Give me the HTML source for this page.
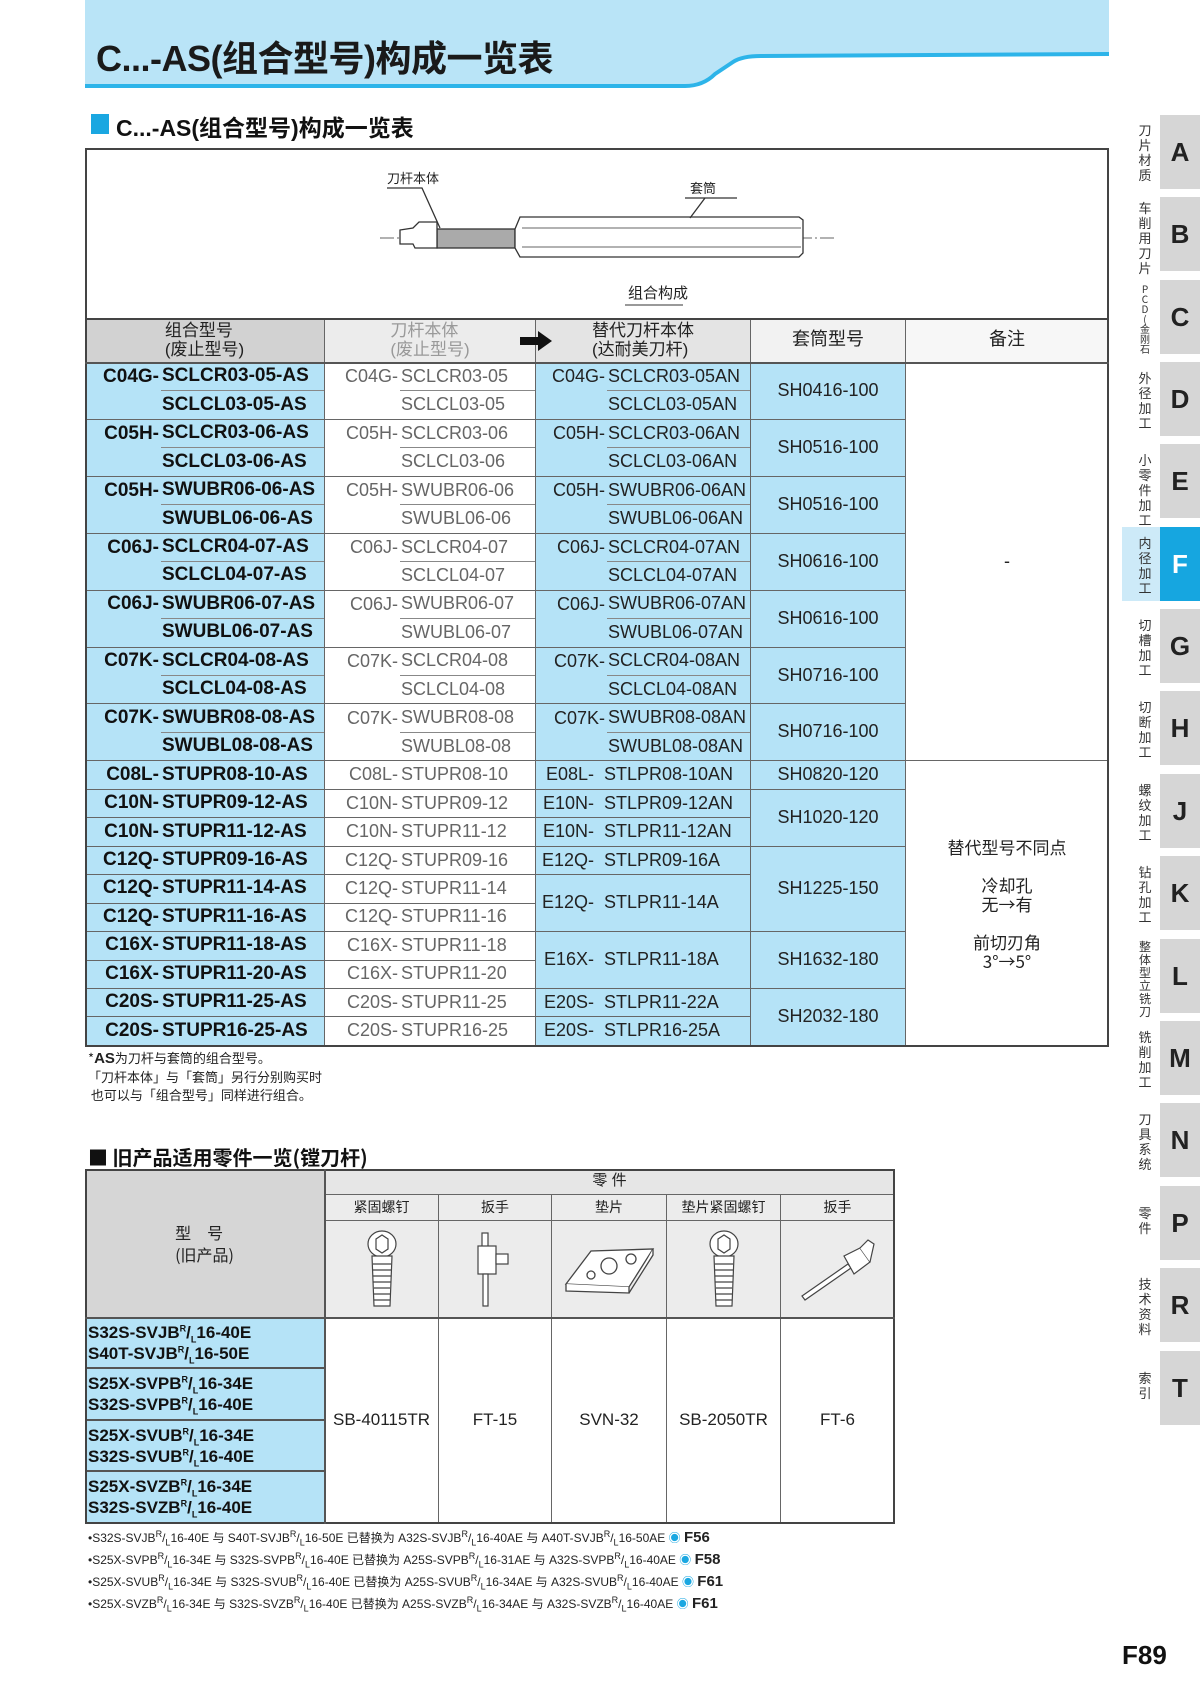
<!DOCTYPE html>
<html><head><meta charset="utf-8"><style>
*{margin:0;padding:0;box-sizing:border-box}
body{width:1200px;height:1697px;background:#fff;position:relative;overflow:hidden;font-family:"Liberation Sans","Noto Sans CJK SC",sans-serif;color:#222}
.abs{position:absolute}
.grid{position:absolute;display:grid}
.c{border-right:1px solid #666;border-bottom:1px solid #666;display:flex;align-items:center;justify-content:center;font-size:18px;line-height:1.1;white-space:nowrap;overflow:hidden}
.b{background:#b5e3f7}
.w{background:#fff}
.pf{display:flex;align-items:stretch;justify-content:flex-start;padding:0}
.pf .p{display:flex;align-items:center;justify-content:flex-end;padding-right:2px}
.pf .s{flex:1;display:flex;align-items:center;padding-left:1px}
.ul .s{border-bottom:1px solid #888}
.nb{border-bottom:none}
.k1{font-weight:bold;font-size:19px;color:#111}
.k2{color:#666}
.tab{position:absolute;left:1160px;width:40px;height:74px;background:#d6d6d6;font:bold 26px "Liberation Sans",sans-serif;color:#222;display:flex;align-items:center;justify-content:center}
.lab{position:absolute;left:1133px;width:24px;font-size:13px;line-height:15px;text-align:center;color:#333;font-family:"Noto Sans CJK SC",sans-serif;word-break:break-all}
sup,sub{font-size:9px;line-height:0}
</style></head><body>

<div class="abs" style="left:85px;top:0;width:1024px;height:88px;background:#b9e4f7"></div>
<svg class="abs" style="left:85px;top:0" width="1024" height="95"><path d="M600 86 Q618 86 630 74 L648 62 Q657 56 676 56 L1024 56 L1024 95 L600 95 Z" fill="#fff"/><rect x="0" y="88" width="1024" height="7" fill="#fff"/><path d="M0 86 L600 86 Q618 86 630 74 L648 62 Q657 56 676 56 L1024 54" stroke="#2db4e9" stroke-width="4" fill="none"/></svg>
<div class="abs" style="left:96px;top:30px;font-size:36px;font-weight:bold;color:#1a1a1a;letter-spacing:-0.5px">C...-AS(组合型号)构成一览表</div>

<div class="abs" style="left:91px;top:114px;width:18px;height:20px;background:#1aa7e1"></div>
<div class="abs" style="left:116px;top:109px;font-size:23px;font-weight:bold;color:#111">C...-AS(组合型号)构成一览表</div>

<div class="abs" style="left:85px;top:148px;width:1024px;height:172px;border:2px solid #444;border-bottom:none"></div>
<svg class="abs" style="left:85px;top:148px" width="1024" height="170">
<g stroke="#333" fill="none" stroke-width="1.3">
<line x1="295" y1="90" x2="750" y2="90" stroke-dasharray="14 3 2 3" stroke-width="0.8"/>
<rect x="352" y="81" width="78" height="19" fill="#aaa"/>
<path d="M315 82 L328 80 L334 74 L352 74 L352 100 L330 100 L328 96 L315 96 Z" fill="#fff"/>
<path d="M430 81 L435 69 L714 69 L718 72 L718 105 L714 109 L435 109 L430 100 Z" fill="#fff"/>
<line x1="437" y1="80" x2="716" y2="80" stroke-width="0.7"/><line x1="437" y1="99" x2="716" y2="99" stroke-width="0.7"/>
<path d="M302 40 L337 40 L355 80"/><path d="M600 50 L652 50 M620 50 L605 70"/>
</g>
<text x="302" y="35" font-size="13" fill="#222" font-family="Noto Sans CJK SC">刀杆本体</text>
<text x="605" y="45" font-size="13" fill="#222" font-family="Noto Sans CJK SC">套筒</text>
<text x="543" y="150" font-size="15" fill="#222" font-family="Noto Sans CJK SC">组合构成</text>
<line x1="540" y1="157" x2="598" y2="157" stroke="#333"/>
</svg>

<div class="grid" style="left:85px;top:318px;width:1024px;grid-template-columns:240px 211px 215px 155px 203px;grid-template-rows:45px repeat(24,28.46px)">
<div class="c" style="grid-area:1/1;background:#d2d2d2;flex-direction:column;font-size:17px;line-height:19px">组合型号<br>(废止型号)</div>
<div class="c" style="grid-area:1/2;background:#ececec;color:#999;flex-direction:column;font-size:17px;line-height:19px">刀杆本体<br>(废止型号)</div>
<div class="c" style="grid-area:1/3;background:#e4e4e4;flex-direction:column;font-size:17px;line-height:19px">替代刀杆本体<br>(达耐美刀杆)</div>
<div class="c" style="grid-area:1/4;background:#f2f2f2">套筒型号</div>
<div class="c" style="grid-area:1/5;background:#f7f7f7">备注</div>

<div class="c b pf k1 ul nb" style="grid-area:2/1"><div class="p" style="width:76px">C04G-</div><div class="s">SCLCR03-05-AS</div></div>
<div class="c b pf k1" style="grid-area:3/1"><div class="p" style="width:76px"></div><div class="s">SCLCL03-05-AS</div></div>
<div class="c w pf k2 ul nb" style="grid-area:2/2"><div class="p" style="width:75px">C04G-</div><div class="s">SCLCR03-05</div></div>
<div class="c w pf k2" style="grid-area:3/2"><div class="p" style="width:75px"></div><div class="s">SCLCL03-05</div></div>
<div class="c b pf ul nb" style="grid-area:2/3"><div class="p" style="width:71px">C04G-</div><div class="s">SCLCR03-05AN</div></div>
<div class="c b pf" style="grid-area:3/3"><div class="p" style="width:71px"></div><div class="s">SCLCL03-05AN</div></div>
<div class="c b" style="grid-area:2/4/4/5">SH0416-100</div>

<div class="c b pf k1 ul nb" style="grid-area:4/1"><div class="p" style="width:76px">C05H-</div><div class="s">SCLCR03-06-AS</div></div>
<div class="c b pf k1" style="grid-area:5/1"><div class="p" style="width:76px"></div><div class="s">SCLCL03-06-AS</div></div>
<div class="c w pf k2 ul nb" style="grid-area:4/2"><div class="p" style="width:75px">C05H-</div><div class="s">SCLCR03-06</div></div>
<div class="c w pf k2" style="grid-area:5/2"><div class="p" style="width:75px"></div><div class="s">SCLCL03-06</div></div>
<div class="c b pf ul nb" style="grid-area:4/3"><div class="p" style="width:71px">C05H-</div><div class="s">SCLCR03-06AN</div></div>
<div class="c b pf" style="grid-area:5/3"><div class="p" style="width:71px"></div><div class="s">SCLCL03-06AN</div></div>
<div class="c b" style="grid-area:4/4/6/5">SH0516-100</div>

<div class="c b pf k1 ul nb" style="grid-area:6/1"><div class="p" style="width:76px">C05H-</div><div class="s">SWUBR06-06-AS</div></div>
<div class="c b pf k1" style="grid-area:7/1"><div class="p" style="width:76px"></div><div class="s">SWUBL06-06-AS</div></div>
<div class="c w pf k2 ul nb" style="grid-area:6/2"><div class="p" style="width:75px">C05H-</div><div class="s">SWUBR06-06</div></div>
<div class="c w pf k2" style="grid-area:7/2"><div class="p" style="width:75px"></div><div class="s">SWUBL06-06</div></div>
<div class="c b pf ul nb" style="grid-area:6/3"><div class="p" style="width:71px">C05H-</div><div class="s">SWUBR06-06AN</div></div>
<div class="c b pf" style="grid-area:7/3"><div class="p" style="width:71px"></div><div class="s">SWUBL06-06AN</div></div>
<div class="c b" style="grid-area:6/4/8/5">SH0516-100</div>

<div class="c b pf k1 ul nb" style="grid-area:8/1"><div class="p" style="width:76px">C06J-</div><div class="s">SCLCR04-07-AS</div></div>
<div class="c b pf k1" style="grid-area:9/1"><div class="p" style="width:76px"></div><div class="s">SCLCL04-07-AS</div></div>
<div class="c w pf k2 ul nb" style="grid-area:8/2"><div class="p" style="width:75px">C06J-</div><div class="s">SCLCR04-07</div></div>
<div class="c w pf k2" style="grid-area:9/2"><div class="p" style="width:75px"></div><div class="s">SCLCL04-07</div></div>
<div class="c b pf ul nb" style="grid-area:8/3"><div class="p" style="width:71px">C06J-</div><div class="s">SCLCR04-07AN</div></div>
<div class="c b pf" style="grid-area:9/3"><div class="p" style="width:71px"></div><div class="s">SCLCL04-07AN</div></div>
<div class="c b" style="grid-area:8/4/10/5">SH0616-100</div>

<div class="c b pf k1 ul nb" style="grid-area:10/1"><div class="p" style="width:76px">C06J-</div><div class="s">SWUBR06-07-AS</div></div>
<div class="c b pf k1" style="grid-area:11/1"><div class="p" style="width:76px"></div><div class="s">SWUBL06-07-AS</div></div>
<div class="c w pf k2 ul nb" style="grid-area:10/2"><div class="p" style="width:75px">C06J-</div><div class="s">SWUBR06-07</div></div>
<div class="c w pf k2" style="grid-area:11/2"><div class="p" style="width:75px"></div><div class="s">SWUBL06-07</div></div>
<div class="c b pf ul nb" style="grid-area:10/3"><div class="p" style="width:71px">C06J-</div><div class="s">SWUBR06-07AN</div></div>
<div class="c b pf" style="grid-area:11/3"><div class="p" style="width:71px"></div><div class="s">SWUBL06-07AN</div></div>
<div class="c b" style="grid-area:10/4/12/5">SH0616-100</div>

<div class="c b pf k1 ul nb" style="grid-area:12/1"><div class="p" style="width:76px">C07K-</div><div class="s">SCLCR04-08-AS</div></div>
<div class="c b pf k1" style="grid-area:13/1"><div class="p" style="width:76px"></div><div class="s">SCLCL04-08-AS</div></div>
<div class="c w pf k2 ul nb" style="grid-area:12/2"><div class="p" style="width:75px">C07K-</div><div class="s">SCLCR04-08</div></div>
<div class="c w pf k2" style="grid-area:13/2"><div class="p" style="width:75px"></div><div class="s">SCLCL04-08</div></div>
<div class="c b pf ul nb" style="grid-area:12/3"><div class="p" style="width:71px">C07K-</div><div class="s">SCLCR04-08AN</div></div>
<div class="c b pf" style="grid-area:13/3"><div class="p" style="width:71px"></div><div class="s">SCLCL04-08AN</div></div>
<div class="c b" style="grid-area:12/4/14/5">SH0716-100</div>

<div class="c b pf k1 ul nb" style="grid-area:14/1"><div class="p" style="width:76px">C07K-</div><div class="s">SWUBR08-08-AS</div></div>
<div class="c b pf k1" style="grid-area:15/1"><div class="p" style="width:76px"></div><div class="s">SWUBL08-08-AS</div></div>
<div class="c w pf k2 ul nb" style="grid-area:14/2"><div class="p" style="width:75px">C07K-</div><div class="s">SWUBR08-08</div></div>
<div class="c w pf k2" style="grid-area:15/2"><div class="p" style="width:75px"></div><div class="s">SWUBL08-08</div></div>
<div class="c b pf ul nb" style="grid-area:14/3"><div class="p" style="width:71px">C07K-</div><div class="s">SWUBR08-08AN</div></div>
<div class="c b pf" style="grid-area:15/3"><div class="p" style="width:71px"></div><div class="s">SWUBL08-08AN</div></div>
<div class="c b" style="grid-area:14/4/16/5">SH0716-100</div>

<div class="c w" style="grid-area:2/5/16/6">-</div>

<div class="c b pf k1" style="grid-area:16/1"><div class="p" style="width:76px">C08L-</div><div class="s">STUPR08-10-AS</div></div>
<div class="c b pf k1" style="grid-area:17/1"><div class="p" style="width:76px">C10N-</div><div class="s">STUPR09-12-AS</div></div>
<div class="c b pf k1" style="grid-area:18/1"><div class="p" style="width:76px">C10N-</div><div class="s">STUPR11-12-AS</div></div>
<div class="c b pf k1" style="grid-area:19/1"><div class="p" style="width:76px">C12Q-</div><div class="s">STUPR09-16-AS</div></div>
<div class="c b pf k1" style="grid-area:20/1"><div class="p" style="width:76px">C12Q-</div><div class="s">STUPR11-14-AS</div></div>
<div class="c b pf k1" style="grid-area:21/1"><div class="p" style="width:76px">C12Q-</div><div class="s">STUPR11-16-AS</div></div>
<div class="c b pf k1" style="grid-area:22/1"><div class="p" style="width:76px">C16X-</div><div class="s">STUPR11-18-AS</div></div>
<div class="c b pf k1" style="grid-area:23/1"><div class="p" style="width:76px">C16X-</div><div class="s">STUPR11-20-AS</div></div>
<div class="c b pf k1" style="grid-area:24/1"><div class="p" style="width:76px">C20S-</div><div class="s">STUPR11-25-AS</div></div>
<div class="c b pf k1" style="grid-area:25/1"><div class="p" style="width:76px">C20S-</div><div class="s">STUPR16-25-AS</div></div>

<div class="c w pf k2" style="grid-area:16/2"><div class="p" style="width:75px">C08L-</div><div class="s">STUPR08-10</div></div>
<div class="c w pf k2" style="grid-area:17/2"><div class="p" style="width:75px">C10N-</div><div class="s">STUPR09-12</div></div>
<div class="c w pf k2" style="grid-area:18/2"><div class="p" style="width:75px">C10N-</div><div class="s">STUPR11-12</div></div>
<div class="c w pf k2" style="grid-area:19/2"><div class="p" style="width:75px">C12Q-</div><div class="s">STUPR09-16</div></div>
<div class="c w pf k2" style="grid-area:20/2"><div class="p" style="width:75px">C12Q-</div><div class="s">STUPR11-14</div></div>
<div class="c w pf k2" style="grid-area:21/2"><div class="p" style="width:75px">C12Q-</div><div class="s">STUPR11-16</div></div>
<div class="c w pf k2" style="grid-area:22/2"><div class="p" style="width:75px">C16X-</div><div class="s">STUPR11-18</div></div>
<div class="c w pf k2" style="grid-area:23/2"><div class="p" style="width:75px">C16X-</div><div class="s">STUPR11-20</div></div>
<div class="c w pf k2" style="grid-area:24/2"><div class="p" style="width:75px">C20S-</div><div class="s">STUPR11-25</div></div>
<div class="c w pf k2" style="grid-area:25/2"><div class="p" style="width:75px">C20S-</div><div class="s">STUPR16-25</div></div>

<div class="c b pf" style="grid-area:16/3"><div class="p" style="width:60px">E08L-</div><div class="s" style="padding-left:8px">STLPR08-10AN</div></div>
<div class="c b pf" style="grid-area:17/3"><div class="p" style="width:60px">E10N-</div><div class="s" style="padding-left:8px">STLPR09-12AN</div></div>
<div class="c b pf" style="grid-area:18/3"><div class="p" style="width:60px">E10N-</div><div class="s" style="padding-left:8px">STLPR11-12AN</div></div>
<div class="c b pf" style="grid-area:19/3"><div class="p" style="width:60px">E12Q-</div><div class="s" style="padding-left:8px">STLPR09-16A</div></div>
<div class="c b pf" style="grid-area:20/3/22/4"><div class="p" style="width:60px">E12Q-</div><div class="s" style="padding-left:8px">STLPR11-14A</div></div>
<div class="c b pf" style="grid-area:22/3/24/4"><div class="p" style="width:60px">E16X-</div><div class="s" style="padding-left:8px">STLPR11-18A</div></div>
<div class="c b pf" style="grid-area:24/3"><div class="p" style="width:60px">E20S-</div><div class="s" style="padding-left:8px">STLPR11-22A</div></div>
<div class="c b pf" style="grid-area:25/3"><div class="p" style="width:60px">E20S-</div><div class="s" style="padding-left:8px">STLPR16-25A</div></div>

<div class="c b" style="grid-area:16/4">SH0820-120</div>
<div class="c b" style="grid-area:17/4/19/5">SH1020-120</div>
<div class="c b" style="grid-area:19/4/22/5">SH1225-150</div>
<div class="c b" style="grid-area:22/4/24/5">SH1632-180</div>
<div class="c b" style="grid-area:24/4/26/5">SH2032-180</div>
<div class="c w" style="grid-area:16/5/26/6;flex-direction:column;font-size:17px;line-height:19px;text-align:center;font-family:'Noto Sans CJK SC',sans-serif">替代型号不同点<br><br>冷却孔<br>无→有<br><br>前切刃角<br>3°→5°</div>
</div>
<div class="abs" style="left:85px;top:318px;width:1024px;height:729px;border:2px solid #444;pointer-events:none"></div>
<div class="abs" style="left:85px;top:362px;width:1024px;height:2px;background:#555"></div>
<svg class="abs" style="left:518px;top:330px" width="36" height="22"><path d="M2 7 H20 V1 L34 11 L20 21 V15 H2 Z" fill="#111"/></svg>

<div class="abs" style="left:88px;top:1049px;font-size:13px;line-height:18px;color:#222;font-family:'Noto Sans CJK SC',sans-serif">*<b style="font-size:15px;font-family:'Liberation Sans'">AS</b>为刀杆与套筒的组合型号。<br>「刀杆本体」与「套筒」另行分别购买时<br>&nbsp;也可以与「组合型号」同样进行组合。</div>

<div class="abs" style="left:88px;top:1142px;font-size:20px;font-weight:bold;color:#111;font-family:'Noto Sans CJK SC',sans-serif">■ 旧产品适用零件一览(镗刀杆)</div>
<div class="grid" style="left:85px;top:1169px;width:810px;grid-template-columns:240px 114px 113px 115px 114px 114px;grid-template-rows:26px 26px 97px repeat(4,51.25px)">
<div class="c" style="grid-area:1/1/4/2;background:#d6d6d6;flex-direction:column;font-size:16px;line-height:22px;font-family:'Noto Sans CJK SC',sans-serif">型　号<br>(旧产品)</div>
<div class="c" style="grid-area:1/2/2/7;background:#e6e6e6;font-size:15px">零 件</div>
<div class="c" style="grid-area:2/2;background:#ececec;font-size:14px">紧固螺钉</div>
<div class="c" style="grid-area:2/3;background:#ececec;font-size:14px">扳手</div>
<div class="c" style="grid-area:2/4;background:#ececec;font-size:14px">垫片</div>
<div class="c" style="grid-area:2/5;background:#ececec;font-size:14px">垫片紧固螺钉</div>
<div class="c" style="grid-area:2/6;background:#ececec;font-size:14px">扳手</div>
<div class="c" style="grid-area:3/2;background:#ececec"><svg width="40" height="82"><g stroke="#444" fill="#fff" stroke-width="1.2"><ellipse cx="20" cy="16" rx="14" ry="13"/><path d="M14 11 L20 7 L26 11 L26 21 L20 25 L14 21 Z"/><path d="M10 28 L30 28 L28 78 L12 78 Z"/><path d="M11 36 H29 M11 42 H29 M11 48 H29 M11 54 H29 M12 60 H28 M12 66 H28 M12 72 H28"/></g></svg></div>
<div class="c" style="grid-area:3/3;background:#ececec"><svg width="50" height="82"><g stroke="#444" fill="#fff" stroke-width="1.2"><rect x="12" y="5" width="6" height="15"/><rect x="8" y="18" width="18" height="28"/><rect x="26" y="26" width="12" height="10"/><rect x="13" y="46" width="5" height="32"/></g></svg></div>
<div class="c" style="grid-area:3/4;background:#ececec"><svg width="96" height="60"><g stroke="#444" fill="#fff" stroke-width="1.3"><path d="M5 45 L30 12 L92 10 L68 48 Z"/><path d="M5 45 L5 52 L68 54 L68 48"/><path d="M68 54 L92 16 L92 10"/><circle cx="30" cy="36" r="4"/><circle cx="48" cy="27" r="8"/><circle cx="70" cy="20" r="5"/></g></svg></div>
<div class="c" style="grid-area:3/5;background:#ececec"><svg width="40" height="82"><g stroke="#444" fill="#fff" stroke-width="1.2"><ellipse cx="20" cy="16" rx="14" ry="13"/><path d="M14 11 L20 7 L26 11 L26 21 L20 25 L14 21 Z"/><path d="M10 28 L30 28 L28 78 L12 78 Z"/><path d="M11 36 H29 M11 42 H29 M11 48 H29 M11 54 H29 M12 60 H28 M12 66 H28 M12 72 H28"/></g></svg></div>
<div class="c" style="grid-area:3/6;background:#ececec"><svg width="80" height="70"><g stroke="#444" fill="#fff" stroke-width="1.2"><path d="M4 62 L50 30 L53 34 L7 66 Z"/><path d="M46 22 L62 14 L72 28 L56 40 Z"/><path d="M62 14 L70 6 L76 10 L72 28"/></g></svg></div>
<div class="c b" style="grid-area:4/1"></div><div class="c b" style="grid-area:5/1"></div><div class="c b" style="grid-area:6/1"></div><div class="c b" style="grid-area:7/1"></div>
<div class="c w" style="grid-area:4/2/8/3;font-size:17px">SB-40115TR</div>
<div class="c w" style="grid-area:4/3/8/4;font-size:17px">FT-15</div>
<div class="c w" style="grid-area:4/4/8/5;font-size:17px">SVN-32</div>
<div class="c w" style="grid-area:4/5/8/6;font-size:17px">SB-2050TR</div>
<div class="c w" style="grid-area:4/6/8/7;font-size:17px">FT-6</div>
</div>
<div class="abs" style="left:85px;top:1318px;width:240px;font-weight:bold;font-size:17px;line-height:21px;color:#111">
<div style="height:51.25px;padding:4px 3px;border-bottom:2px solid #555">S32S-SVJB<sup>R</sup>/<sub>L</sub>16-40E<br>S40T-SVJB<sup>R</sup>/<sub>L</sub>16-50E</div>
<div style="height:51.25px;padding:4px 3px;border-bottom:2px solid #555">S25X-SVPB<sup>R</sup>/<sub>L</sub>16-34E<br>S32S-SVPB<sup>R</sup>/<sub>L</sub>16-40E</div>
<div style="height:51.25px;padding:4px 3px;border-bottom:2px solid #555">S25X-SVUB<sup>R</sup>/<sub>L</sub>16-34E<br>S32S-SVUB<sup>R</sup>/<sub>L</sub>16-40E</div>
<div style="height:51.25px;padding:4px 3px">S25X-SVZB<sup>R</sup>/<sub>L</sub>16-34E<br>S32S-SVZB<sup>R</sup>/<sub>L</sub>16-40E</div>
</div>
<div class="abs" style="left:85px;top:1169px;width:810px;height:355px;border:2px solid #444;pointer-events:none"></div>
<div class="abs" style="left:85px;top:1317px;width:810px;height:2px;background:#555"></div>
<div class="abs" style="left:324px;top:1169px;width:2px;height:355px;background:#555"></div>

<div class="abs" style="left:88px;top:1527px;font-size:12px;line-height:22px;color:#222;white-space:nowrap">
<div>•S32S-SVJB<sup>R</sup>/<sub>L</sub>16-40E 与 S40T-SVJB<sup>R</sup>/<sub>L</sub>16-50E 已替换为 A32S-SVJB<sup>R</sup>/<sub>L</sub>16-40AE 与 A40T-SVJB<sup>R</sup>/<sub>L</sub>16-50AE <span style="color:#1aa7e1">◉</span> <b style="font-size:15px">F56</b></div>
<div>•S25X-SVPB<sup>R</sup>/<sub>L</sub>16-34E 与 S32S-SVPB<sup>R</sup>/<sub>L</sub>16-40E 已替换为 A25S-SVPB<sup>R</sup>/<sub>L</sub>16-31AE 与 A32S-SVPB<sup>R</sup>/<sub>L</sub>16-40AE <span style="color:#1aa7e1">◉</span> <b style="font-size:15px">F58</b></div>
<div>•S25X-SVUB<sup>R</sup>/<sub>L</sub>16-34E 与 S32S-SVUB<sup>R</sup>/<sub>L</sub>16-40E 已替换为 A25S-SVUB<sup>R</sup>/<sub>L</sub>16-34AE 与 A32S-SVUB<sup>R</sup>/<sub>L</sub>16-40AE <span style="color:#1aa7e1">◉</span> <b style="font-size:15px">F61</b></div>
<div>•S25X-SVZB<sup>R</sup>/<sub>L</sub>16-34E 与 S32S-SVZB<sup>R</sup>/<sub>L</sub>16-40E 已替换为 A25S-SVZB<sup>R</sup>/<sub>L</sub>16-34AE 与 A32S-SVZB<sup>R</sup>/<sub>L</sub>16-40AE <span style="color:#1aa7e1">◉</span> <b style="font-size:15px">F61</b></div>
</div>

<div class="abs" style="left:1122px;top:1640px;font-size:26px;font-weight:bold;color:#111">F89</div>

<div class="abs" style="left:1122px;top:527px;width:38px;height:74px;background:#cdeaf8"></div>
<div class="tab" style="top:115px">A</div><div class="lab" style="top:122px">刀片材质</div>
<div class="tab" style="top:197px">B</div><div class="lab" style="top:200px">车削用刀片</div>
<div class="tab" style="top:280px">C</div><div class="lab" style="top:284px;font-size:10px;line-height:10px">P<br>C<br>D<br>(<br>金<br>刚<br>石</div>
<div class="tab" style="top:362px">D</div><div class="lab" style="top:370px">外径加工</div>
<div class="tab" style="top:444px">E</div><div class="lab" style="top:452px">小零件加工</div>
<div class="tab" style="top:527px;background:#16a6e0;color:#fff">F</div><div class="lab" style="top:535px">内径加工</div>
<div class="tab" style="top:609px">G</div><div class="lab" style="top:617px">切槽加工</div>
<div class="tab" style="top:691px">H</div><div class="lab" style="top:699px">切断加工</div>
<div class="tab" style="top:774px">J</div><div class="lab" style="top:782px">螺纹加工</div>
<div class="tab" style="top:856px">K</div><div class="lab" style="top:864px">钻孔加工</div>
<div class="tab" style="top:939px">L</div><div class="lab" style="top:940px;line-height:13px;font-size:12px;width:14px;left:1138px">整体型立铣刀</div>
<div class="tab" style="top:1021px">M</div><div class="lab" style="top:1029px">铣削加工</div>
<div class="tab" style="top:1103px">N</div><div class="lab" style="top:1111px">刀具系统</div>
<div class="tab" style="top:1186px">P</div><div class="lab" style="top:1205px">零件</div>
<div class="tab" style="top:1268px">R</div><div class="lab" style="top:1276px">技术资料</div>
<div class="tab" style="top:1351px">T</div><div class="lab" style="top:1370px">索引</div>
</body></html>
